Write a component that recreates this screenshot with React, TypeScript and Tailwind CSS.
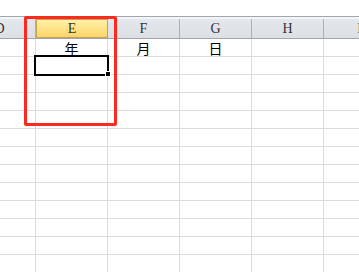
import React from "react";

const cols = ["D", "E", "F", "G", "H", "I"];
const rows = Array.from({ length: 13 }, (_, i) => i);

export default function App() {
  return (
    <div className="relative w-[359px] h-[272px] overflow-hidden bg-white">
      <div className="h-[16px] bg-white" />
      <div className="h-[1px] bg-[#a0a8b0]" />
      <div className="h-[2px] bg-[#f3f5f7]" />
      {/* header */}
      <div className="flex ml-[-36px] h-[20px] border-b border-[#9ea6ae]">
        {cols.map((c) => (
          <div
            key={c}
            className={
              c === "E"
                ? "w-[72px] shrink-0 flex items-center justify-center bg-gradient-to-b from-[#fff1a6] to-[#fcd467] border border-[#c9a14e] text-[14px] text-[#333] font-['Liberation_Serif',serif]"
                : "w-[72px] shrink-0 flex items-center justify-center bg-gradient-to-b from-[#e4e8ec] to-[#dcdfe4] border-r border-[#aab1b9] text-[14px] text-[#333] font-['Liberation_Serif',serif]"
            }
          >
            {c}
          </div>
        ))}
      </div>
      {rows.map((r) => (
        <div key={r} className="flex ml-[-36px] h-[18px] border-b border-[#dadcdd]">
          {cols.map((c) => {
            let t = "";
            if (r === 0 && c === "E") t = "年";
            if (r === 0 && c === "F") t = "月";
            if (r === 0 && c === "G") t = "日";
            return (
              <div
                key={c}
                className="w-[72px] shrink-0 flex items-center justify-center pt-[1px] border-r border-[#dadcdd] text-[14px] text-black leading-none font-['Noto_Sans_CJK_SC',sans-serif]"
              >
                {t}
              </div>
            );
          })}
        </div>
      ))}
      {/* selected cell */}
      <div className="absolute left-[34px] top-[55px] w-[75px] h-[21px] border-2 border-black" />
      <div className="absolute left-[105px] top-[71px] w-[6px] h-[6px] bg-black border border-white" />
      {/* red box */}
      <div className="absolute left-[24px] top-[16px] w-[93px] h-[110px] border-[3px] border-[#ff2a1f] rounded-[2px]" />
    </div>
  );
}
